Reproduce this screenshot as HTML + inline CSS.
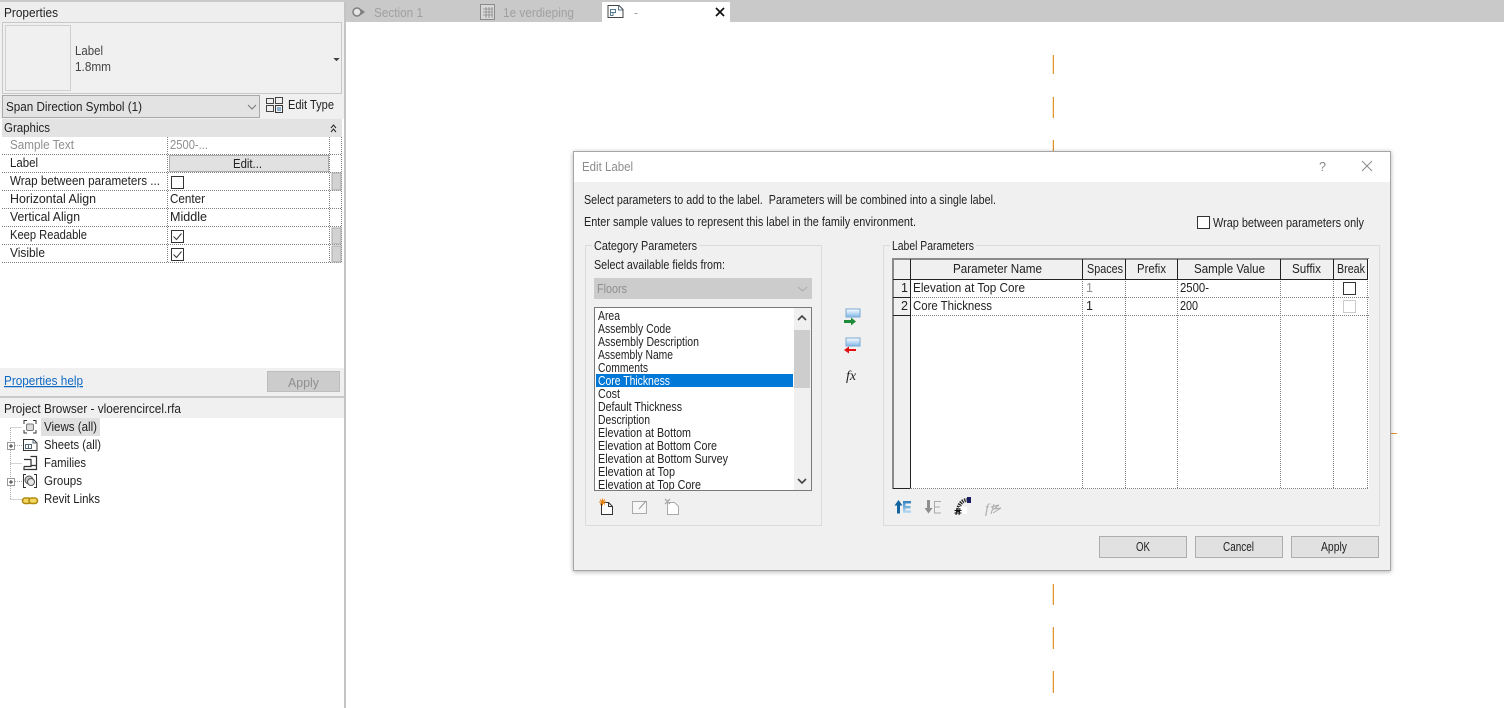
<!DOCTYPE html>
<html><head><meta charset="utf-8"><style>
html,body{margin:0;padding:0;background:#fff;overflow:hidden}
svg{display:block}
text{font-family:"Liberation Sans",sans-serif;font-size:12.5px;fill:#222;white-space:pre}
.g{fill:#8f8f8f}.t{fill:#a0a0a0}
.o{fill:#e0952f}.ol{fill:#f8e3c4}
</style></head><body>
<svg width="1504" height="708" viewBox="0 0 1504 708" xmlns="http://www.w3.org/2000/svg" shape-rendering="crispEdges">
<defs>
<filter id="sh" x="-3%" y="-3%" width="106%" height="108%"><feDropShadow dx="0" dy="1" stdDeviation="2.5" flood-color="#000" flood-opacity=".3"/></filter>
<clipPath id="lc"><rect x="595" y="308" width="199" height="182"/></clipPath>
<linearGradient id="bl" x1="0" y1="0" x2="0" y2="1"><stop offset="0" stop-color="#fff"/><stop offset="1" stop-color="#7fb8e8"/></linearGradient>
<linearGradient id="bl2" x1="0" y1="0" x2="0" y2="1"><stop offset="0" stop-color="#2b7fc0"/><stop offset="1" stop-color="#bfe0f5"/></linearGradient>
</defs>
<rect width="1504" height="708" fill="#fff"/>

<!-- canvas lines -->
<rect class="ol" x="1052" y="55" width="1" height="19"/><rect class="o" x="1053" y="55" width="1" height="19"/>
<rect class="ol" x="1052" y="97" width="1" height="21"/><rect class="o" x="1053" y="97" width="1" height="21"/>
<rect class="ol" x="1052" y="140" width="1" height="12"/><rect class="o" x="1053" y="140" width="1" height="12"/>
<rect class="ol" x="1052" y="584" width="1" height="21"/><rect class="o" x="1053" y="584" width="1" height="21"/>
<rect class="ol" x="1052" y="627" width="1" height="22"/><rect class="o" x="1053" y="627" width="1" height="22"/>
<rect class="ol" x="1052" y="671" width="1" height="22"/><rect class="o" x="1053" y="671" width="1" height="22"/>
<rect class="o" x="1390" y="433" width="7" height="1"/>

<!-- tabs -->
<rect x="346" y="0" width="1158" height="22" fill="#c9c9c9"/>
<rect x="602" y="2" width="128" height="20" fill="#fff"/>
<g shape-rendering="auto">
<circle cx="357" cy="12" r="4" fill="#e6e6e6" stroke="#7f7f7f" stroke-width="1.500"/>
<path d="M361 9l4 3-4 3z" fill="#7f7f7f"/>
<rect x="480.500" y="4.500" width="14" height="15" fill="#d8d8d8" stroke="#8a8a8a"/>
<path d="M483 9h10M483 12h10M483 15h10M486 7v11M489 7v11M492 7v11" stroke="#8a8a8a" stroke-width=".8"/>
<path d="M608 5.500h11l4 4v8h-15z" fill="#fff" stroke="#444"/><path d="M610.500 9.500h5v3h-5zM610.500 12.500v3h2.500v-3M618.500 6v4h4" fill="none" stroke="#5a7a90"/>
<path d="M716 8l8 8M724 8l-8 8" stroke="#111" stroke-width="1.700"/>
<text class="t" x="374" y="17" textLength="49" lengthAdjust="spacingAndGlyphs">Section 1</text>
<text class="t" x="503" y="17" textLength="71" lengthAdjust="spacingAndGlyphs">1e verdieping</text>
<text class="t" x="634" y="17">-</text>
</g>

<!-- left panel -->
<rect x="0" y="0" width="344" height="708" fill="#fff"/>
<rect x="344" y="0" width="2" height="708" fill="#c4c4c4"/>
<rect x="0" y="0" width="346" height="2" fill="#c9c9c9"/>
<rect x="0" y="2" width="344" height="20" fill="#eeeeee"/>
<rect x="0" y="22" width="344" height="75" fill="#f0f0f0"/>
<rect x="2.500" y="22.500" width="339" height="71" fill="#f0f0f0" stroke="#c8c8c8"/>
<rect x="5.500" y="25.500" width="65" height="65" fill="#f0f0f0" stroke="#d0d0d0"/>
<path d="M333 58h7l-3.500 3z" fill="#444"/>
<rect x="0" y="94" width="344" height="25" fill="#f0f0f0"/>
<rect x="2.500" y="95.500" width="257" height="22" fill="#e3e3e3" stroke="#a8a8a8"/>
<path d="M248 105l4 4 4-4" fill="none" stroke="#777" shape-rendering="auto"/>
<g fill="none" stroke="#444" shape-rendering="auto"><rect x="266.500" y="98.500" width="7" height="5"/><rect x="275.500" y="97.500" width="7" height="6"/><rect x="266.500" y="105.500" width="7" height="6"/><rect x="275.500" y="105.500" width="7" height="7" stroke="#333"/><path d="M277 108h4M277 110h4" stroke="#2c6ea8"/></g>
<rect x="2" y="119" width="340" height="18" fill="#e3e3e3"/>
<path d="M331 128l2.500-3 2.500 3M331 132l2.500-3 2.500 3" fill="none" stroke="#222" shape-rendering="auto"/>

<g stroke="#808080" stroke-dasharray="1 1" fill="none">
<path d="M2 154.500h340M2 172.500h340M2 190.500h340M2 208.500h340M2 226.500h340M2 244.500h340M2 262.500h340"/>
<path d="M167.500 137v126M329.500 137v126M341.500 137v126"/>
</g>
<rect x="169.500" y="155.500" width="159" height="16" fill="#e1e1e1" stroke="#adadad"/>
<rect x="332" y="173" width="9" height="17" fill="#d2d2d2" stroke="#aaa"/>
<rect x="332" y="228" width="9" height="16" fill="#d2d2d2" stroke="#aaa"/>
<rect x="332" y="246" width="9" height="16" fill="#d2d2d2" stroke="#aaa"/>
<rect x="171.500" y="176.500" width="12" height="12" fill="#fff" stroke="#333"/>
<rect x="171.500" y="230.500" width="12" height="12" fill="#fff" stroke="#333"/>
<rect x="171.500" y="248.500" width="12" height="12" fill="#fff" stroke="#333"/>
<path d="M173.500 236.500l3 3 5-6M173.500 254.500l3 3 5-6" fill="none" stroke="#333" shape-rendering="auto"/>

<rect x="0" y="368" width="344" height="28" fill="#f0f0f0"/>
<rect x="267.500" y="371.500" width="72" height="20" fill="#cccccc" stroke="#bdbdbd"/>
<rect x="0" y="396" width="344" height="2" fill="#c9c9c9"/>
<rect x="0" y="398" width="344" height="20" fill="#f0f0f0"/>
<rect x="41" y="418" width="59" height="18" fill="#e0e0e0"/>
<!-- tree -->
<g stroke="#aaa" stroke-dasharray="1 1" fill="none"><path d="M10.500 428v71M10.500 427.500h12M15 445.500h8M10.500 463.500h12M15 481.500h8M10.500 499.500h12"/></g>
<g fill="#fff" stroke="#999"><rect x="7.500" y="442.500" width="7" height="7"/><rect x="7.500" y="478.500" width="7" height="7"/></g>
<path d="M9 446h4M11 444v4M9 482h4M11 480v4" stroke="#333"/>
<g fill="none" stroke="#333" shape-rendering="auto">
<path d="M24 424v-3.500h3M33 420.500h3v3.500M36 430v3h-3M27 433h-3v-3"/><rect x="26.500" y="424" width="7" height="6.500" stroke="#777" fill="#ddd" rx="1.500"/>
<path d="M23.500 439.500h10l3.500 3.500v7.500h-13.500z" fill="#fff"/><path d="M25.500 444.500h6v4h-6zM28.500 444.500v4M33 440v3h3" stroke="#567"/>
<path d="M30.500 456.500h6v9h-5M24 459.500h7v7h-7M24 466.500v3h12.500v-4" stroke-width="1.200"/>
<path d="M26 474.500h-2.500v13h2.500M34 474.500h2.500v13h-2.500"/><circle cx="29" cy="480" r="4" fill="#c8c8c8" stroke="#555"/><circle cx="31" cy="482" r="3.500" fill="#e8e8e8" stroke="#555"/>
<rect x="22.500" y="498" width="8.500" height="5.500" rx="2.700" stroke="#b08a10" stroke-width="1.600" fill="#f2d860"/><rect x="29" y="498" width="8.500" height="5.500" rx="2.700" stroke="#b08a10" stroke-width="1.600" fill="#f2d860"/>
</g>

<g shape-rendering="auto">
<text x="4" y="17" textLength="54" lengthAdjust="spacingAndGlyphs">Properties</text>
<text x="75" y="55" textLength="28" lengthAdjust="spacingAndGlyphs" style="fill:#444">Label</text>
<text x="75" y="71" textLength="36" lengthAdjust="spacingAndGlyphs" style="fill:#444">1.8mm</text>
<text x="6" y="111" textLength="136" lengthAdjust="spacingAndGlyphs">Span Direction Symbol (1)</text>
<text x="288" y="109" textLength="46" lengthAdjust="spacingAndGlyphs">Edit Type</text>
<text x="4" y="132" textLength="46" lengthAdjust="spacingAndGlyphs">Graphics</text>
<text class="g" x="10" y="149" textLength="64" lengthAdjust="spacingAndGlyphs">Sample Text</text>
<text class="g" x="170" y="149" textLength="38" lengthAdjust="spacingAndGlyphs">2500-...</text>
<text x="10" y="167" textLength="28" lengthAdjust="spacingAndGlyphs">Label</text>
<text x="233" y="168" textLength="29" lengthAdjust="spacingAndGlyphs">Edit...</text>
<text x="10" y="185" textLength="150" lengthAdjust="spacingAndGlyphs">Wrap between parameters ...</text>
<text x="10" y="203" textLength="86" lengthAdjust="spacingAndGlyphs">Horizontal Align</text>
<text x="170" y="203" textLength="35" lengthAdjust="spacingAndGlyphs">Center</text>
<text x="10" y="221" textLength="70" lengthAdjust="spacingAndGlyphs">Vertical Align</text>
<text x="170" y="221" textLength="37" lengthAdjust="spacingAndGlyphs">Middle</text>
<text x="10" y="239" textLength="77" lengthAdjust="spacingAndGlyphs">Keep Readable</text>
<text x="10" y="257" textLength="35" lengthAdjust="spacingAndGlyphs">Visible</text>
<text x="4" y="385" textLength="79" lengthAdjust="spacingAndGlyphs" style="fill:#0f69c4" text-decoration="underline">Properties help</text>
<text class="g" x="288" y="387" textLength="31" lengthAdjust="spacingAndGlyphs">Apply</text>
<text x="4" y="413" textLength="177" lengthAdjust="spacingAndGlyphs">Project Browser - vloerencircel.rfa</text>
<text x="44" y="431" textLength="53" lengthAdjust="spacingAndGlyphs">Views (all)</text>
<text x="44" y="449" textLength="57" lengthAdjust="spacingAndGlyphs">Sheets (all)</text>
<text x="44" y="467" textLength="42" lengthAdjust="spacingAndGlyphs">Families</text>
<text x="44" y="485" textLength="38" lengthAdjust="spacingAndGlyphs">Groups</text>
<text x="44" y="503" textLength="56" lengthAdjust="spacingAndGlyphs">Revit Links</text>
</g>

<!-- dialog -->
<rect x="573.500" y="151.500" width="817" height="419" fill="#f0f0f0" stroke="#a6a6a6" filter="url(#sh)"/>
<rect x="574" y="152" width="816" height="30" fill="#fff"/>
<g shape-rendering="auto">
<path d="M1362 161l10 10M1372 161l-10 10" stroke="#8a8a8a" fill="none"/>
<text x="1319" y="171" style="fill:#8a8a8a">?</text>
<text x="582" y="171" textLength="51" lengthAdjust="spacingAndGlyphs" style="fill:#8c8c8c">Edit Label</text>
<text x="584" y="204" textLength="412" lengthAdjust="spacingAndGlyphs">Select parameters to add to the label.  Parameters will be combined into a single label.</text>
<text x="584" y="226" textLength="332" lengthAdjust="spacingAndGlyphs">Enter sample values to represent this label in the family environment.</text>
<text x="1213" y="227" textLength="151" lengthAdjust="spacingAndGlyphs">Wrap between parameters only</text>
</g>
<rect x="1197.500" y="216.500" width="12" height="12" fill="#fff" stroke="#333"/>

<!-- group boxes -->
<rect x="585.500" y="245.500" width="236" height="280" fill="none" stroke="#dcdcdc"/>
<rect x="883.500" y="245.500" width="496" height="280" fill="none" stroke="#dcdcdc"/>
<rect x="592" y="243" width="107" height="6" fill="#f0f0f0"/>
<rect x="890" y="243" width="86" height="6" fill="#f0f0f0"/>
<g shape-rendering="auto">
<text x="594" y="250" textLength="103" lengthAdjust="spacingAndGlyphs">Category Parameters</text>
<text x="892" y="250" textLength="82" lengthAdjust="spacingAndGlyphs">Label Parameters</text>
<text x="594" y="269" textLength="131" lengthAdjust="spacingAndGlyphs">Select available fields from:</text>
</g>
<rect x="594" y="278" width="218" height="21" fill="#cccccc"/>
<path d="M798 287l4.500 4 4.500-4" fill="none" stroke="#aaa" shape-rendering="auto"/>
<text class="g" x="597" y="293" textLength="30" lengthAdjust="spacingAndGlyphs" shape-rendering="auto">Floors</text>

<!-- list -->
<rect x="594.500" y="307.500" width="217" height="183" fill="#fff" stroke="#7a7a7a"/>
<rect x="794" y="308" width="17" height="182" fill="#f0f0f0"/>
<rect x="794" y="330" width="16" height="58" fill="#cdcdcd"/>
<path d="M798 320l4-4 4 4M798 479l4 4 4-4" fill="none" stroke="#444" stroke-width="1.600" shape-rendering="auto"/>
<rect x="596" y="374" width="197" height="13" fill="#0078d7"/>
<g clip-path="url(#lc)" shape-rendering="auto">
<text x="598" y="320" textLength="22" lengthAdjust="spacingAndGlyphs">Area</text>
<text x="598" y="333" textLength="73" lengthAdjust="spacingAndGlyphs">Assembly Code</text>
<text x="598" y="346" textLength="101" lengthAdjust="spacingAndGlyphs">Assembly Description</text>
<text x="598" y="359" textLength="75" lengthAdjust="spacingAndGlyphs">Assembly Name</text>
<text x="598" y="372" textLength="50" lengthAdjust="spacingAndGlyphs">Comments</text>
<text x="598" y="385" textLength="72" lengthAdjust="spacingAndGlyphs" style="fill:#fff">Core Thickness</text>
<text x="598" y="398" textLength="22" lengthAdjust="spacingAndGlyphs">Cost</text>
<text x="598" y="411" textLength="84" lengthAdjust="spacingAndGlyphs">Default Thickness</text>
<text x="598" y="424" textLength="52" lengthAdjust="spacingAndGlyphs">Description</text>
<text x="598" y="437" textLength="93" lengthAdjust="spacingAndGlyphs">Elevation at Bottom</text>
<text x="598" y="450" textLength="119" lengthAdjust="spacingAndGlyphs">Elevation at Bottom Core</text>
<text x="598" y="463" textLength="130" lengthAdjust="spacingAndGlyphs">Elevation at Bottom Survey</text>
<text x="598" y="476" textLength="77" lengthAdjust="spacingAndGlyphs">Elevation at Top</text>
<text x="598" y="489" textLength="103" lengthAdjust="spacingAndGlyphs">Elevation at Top Core</text>
</g>

<!-- list toolbar icons -->
<g shape-rendering="auto" fill="none">
<path d="M601.500 502.500h7l4 4v8h-11z" fill="#fff" stroke="#333"/><path d="M608.500 502.500v4h4" stroke="#333"/>
<path d="M599 502h7M602.500 498.500v7M600 499.500l5 5M605 499.500l-5 5" stroke="#e8830f"/>
<rect x="632.500" y="501.500" width="14" height="12" fill="#f7f7f7" stroke="#aaa"/><path d="M639 509l7-8" stroke="#999"/>
<path d="M667.500 502.500h7l4 4v8h-11z" fill="#fff" stroke="#aaa"/><path d="M665 499l5 5M670 499l-5 5" stroke="#aaa" stroke-width="1.300"/>
</g>

<!-- arrows -->
<rect x="846" y="309" width="14" height="8" fill="url(#bl)" stroke="#7aaad4" stroke-width=".8"/>
<path d="M844 320h7v-2.500l5 4-5 4v-2.500h-7z" fill="#1f8a3a" shape-rendering="auto"/>
<rect x="846" y="338" width="14" height="8" fill="url(#bl)" stroke="#7aaad4" stroke-width=".8"/>
<path d="M856 349h-7v-2.500l-5 3.500 5 3.500v-2.500h7z" fill="#e01010" shape-rendering="auto"/>
<text x="846" y="380" style="font-family:'Liberation Serif',serif;font-style:italic;font-size:14px;fill:#222" shape-rendering="auto">fx</text>

<!-- table -->
<rect x="893" y="259" width="476" height="230" fill="#fff"/>
<rect x="893" y="259" width="475" height="20" fill="#f0f0f0"/>
<rect x="893" y="279" width="17" height="209" fill="#f0f0f0"/>
<g stroke="#808080" stroke-dasharray="1 1" fill="none">
<path d="M910 297.500h459M910 315.500h459M893 488.500h476"/>
<path d="M1082.500 279v210M1125.500 279v210M1177.500 279v210M1280.500 279v210M1333.500 279v210M1367.500 259v230"/>
</g>
<path d="M892.500 489V258.500H1369" fill="none" stroke="#8a8a8a"/>
<path d="M893 259.500h475M893.500 259v230" fill="none" stroke="#8a8a8a"/>
<path d="M893 279.500h475M910.500 259v229.500M893 297.500h17M893 315.500h17M893 488.500h17M1082.500 259v20M1125.500 259v20M1177.500 259v20M1280.500 259v20M1333.500 259v20M1367.500 259v20" fill="none" stroke="#222"/>
<rect x="1343.500" y="282.500" width="12" height="12" fill="#fff" stroke="#333"/>
<rect x="1343.500" y="300.500" width="12" height="12" fill="#fff" stroke="#ccc"/>
<g shape-rendering="auto">
<text x="953" y="273" textLength="89" lengthAdjust="spacingAndGlyphs">Parameter Name</text>
<text x="1087" y="273" textLength="36" lengthAdjust="spacingAndGlyphs">Spaces</text>
<text x="1137" y="273" textLength="29" lengthAdjust="spacingAndGlyphs">Prefix</text>
<text x="1194" y="273" textLength="71" lengthAdjust="spacingAndGlyphs">Sample Value</text>
<text x="1292" y="273" textLength="29" lengthAdjust="spacingAndGlyphs">Suffix</text>
<text x="1337" y="273" textLength="28" lengthAdjust="spacingAndGlyphs">Break</text>
<text x="901" y="292">1</text>
<text x="913" y="292" textLength="112" lengthAdjust="spacingAndGlyphs">Elevation at Top Core</text>
<text class="g" x="1086" y="292">1</text>
<text x="1180" y="292" textLength="29" lengthAdjust="spacingAndGlyphs">2500-</text>
<text x="901" y="310">2</text>
<text x="913" y="310" textLength="79" lengthAdjust="spacingAndGlyphs">Core Thickness</text>
<text x="1086" y="310">1</text>
<text x="1180" y="310" textLength="18" lengthAdjust="spacingAndGlyphs">200</text>
</g>

<!-- table toolbar icons -->
<g shape-rendering="auto">
<path d="M897 513.500v-8h-2.500l4-5.500 4 5.500h-2.500v8z" fill="#14659f"/>
<path d="M903 501h8v2.500h-5.500v2.500h5v2.500h-5v2h5.500v2.500h-8z" fill="url(#bl2)"/>
<path d="M927 500v8h-2.500l4 5.500 4-5.500h-2.500v-8z" fill="#8f8f8f"/>
<path d="M941 501.500h-6.500v11.500h6.500M934.500 507h5.500" fill="none" stroke="#aaa"/>
<path d="M958 512c0-7 4-12 9-12h2" fill="none" stroke="#222" stroke-width="4" stroke-dasharray="1.300 1"/>
<rect x="959" y="507" width="8" height="7" fill="#fff"/>
<rect x="967" y="497" width="4" height="6" fill="#1a1a60"/>
<path d="M957 508l-1 7M960 508l-1 7M954.500 510.500h7M954.500 513h7" stroke="#111" fill="none"/>
<text x="985" y="513" style="font-family:'Liberation Serif',serif;font-style:italic;font-size:14px;fill:#aaa">f</text>
<path d="M991 507l8-2-5 4 7-1-8 5M994 504l-3 10" stroke="#aaa" fill="none"/>
</g>

<!-- buttons -->
<g fill="#e1e1e1" stroke="#adadad">
<rect x="1099.500" y="536.500" width="87" height="21"/>
<rect x="1195.500" y="536.500" width="87" height="21"/>
<rect x="1291.500" y="536.500" width="87" height="21"/>
</g>
<g shape-rendering="auto">
<text x="1136" y="551" textLength="14" lengthAdjust="spacingAndGlyphs">OK</text>
<text x="1223" y="551" textLength="31" lengthAdjust="spacingAndGlyphs">Cancel</text>
<text x="1321" y="551" textLength="26" lengthAdjust="spacingAndGlyphs">Apply</text>
</g>
</svg>
</body></html>
